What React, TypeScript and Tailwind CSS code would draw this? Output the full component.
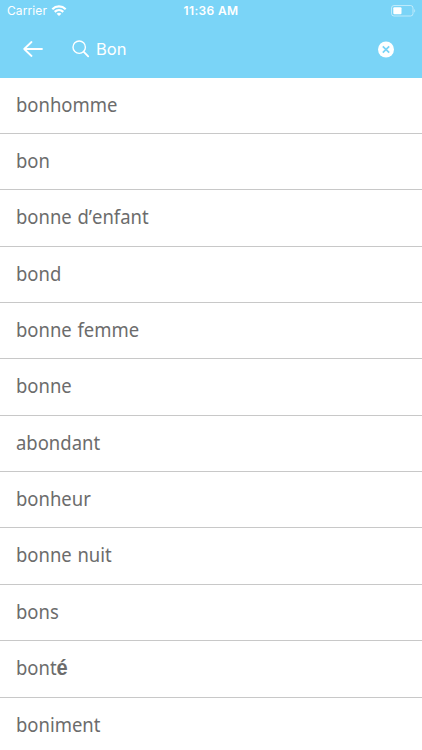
import React from 'react';

const words: string[] = [
  'bonhomme',
  'bon',
  'bonne d’enfant',
  'bond',
  'bonne femme',
  'bonne',
  'abondant',
  'bonheur',
  'bonne nuit',
  'bons',
  'bonté',
  'boniment',
];

const StatusBar: React.FC = () => (
  <div className="grid h-[22px] grid-cols-3 items-center leading-[22px]">
    <div className="flex items-center gap-1 pl-[7px] text-[12px] tracking-[0.1px]">
      <span>Carrier</span>
      <svg className="-mt-px" width="16" height="11" viewBox="0 0 15 11" fill="none" stroke="currentColor" strokeWidth="2.2">
        <path d="M0.8 4.2C4.6 0.5 10.4 0.5 14.2 4.2" />
        <path d="M3.2 6.9C5.7 4.6 9.3 4.6 11.8 6.9" />
        <path d="M7.5 10.9L5.1 8.7Q7.5 6.7 9.9 8.7Z" fill="currentColor" stroke="none" />
      </svg>
    </div>
    <span className="text-center text-[12px] font-semibold tracking-[0.35px]">11:36 AM</span>
    <div className="flex justify-end pr-[6px]">
      <svg width="25" height="12" viewBox="0 0 25 12" fill="none">
        <rect x="0.5" y="0.5" width="21.5" height="10.5" rx="2.5" stroke="white" strokeOpacity="0.5" />
        <rect x="2.3" y="2.2" width="8.2" height="7.1" rx="1" fill="white" />
        <path d="M23.3 4v3.6c1.2-.5 1.2-3.1 0-3.6Z" fill="white" fillOpacity="0.55" />
      </svg>
    </div>
  </div>
);

const SearchBar: React.FC = () => (
  <div className="flex h-14 items-center pr-[27.5px] pb-[2px] pl-[23px]">
    <button aria-label="Back">
      <svg width="20" height="16" viewBox="0 0 20 16" fill="none" stroke="currentColor" strokeWidth="1.8" strokeLinecap="round" strokeLinejoin="round">
        <path d="M8.5 1L1.2 8L8.5 15M1.2 8H19" />
      </svg>
    </button>
    <svg className="ml-[29px]" width="18" height="18" viewBox="0 0 18 18" fill="none" stroke="currentColor" strokeWidth="1.4" strokeLinecap="round">
      <circle cx="7.2" cy="7.2" r="6.2" />
      <path d="M11.8 11.8L16.2 16.4" strokeWidth="1.8" />
    </svg>
    <span className="mt-px ml-[6px] flex-1 text-[16.5px]">Bon</span>
    <button aria-label="Clear">
      <svg width="17" height="17" viewBox="0 0 17 17">
        <circle cx="8" cy="8.5" r="8" fill="white" />
        <path d="M4.8 5.3L11.2 11.7M11.2 5.3L4.8 11.7" stroke="#7ad4f7" strokeWidth="1.7" />
      </svg>
    </button>
  </div>
);

const App: React.FC = () => {
  return (
    <div className="h-screen overflow-hidden bg-white font-['Inter',sans-serif]">
      <header className="bg-[#7ad4f7] text-white">
        <StatusBar />
        <SearchBar />
      </header>
      <ul className="-mt-[0.4px]">
        {words.map((word) => (
          <li
            key={word}
            className="flex h-[56.36px] items-center border-b border-[#c8c8c8] pb-[3px] pl-[15.5px] font-['Noto_Sans',sans-serif] text-[20.3px] text-[#6c6c6c] [font-kerning:none] [word-spacing:1px]"
          >
            <span className="origin-left scale-x-[0.91]">
              {word.endsWith('é') ? (
                <>
                  {word.slice(0, -1)}
                  <span className="font-['Liberation_Sans',sans-serif] text-[22px] leading-none font-bold">é</span>
                </>
              ) : (
                word
              )}
            </span>
          </li>
        ))}
      </ul>
    </div>
  );
};

export default App;
